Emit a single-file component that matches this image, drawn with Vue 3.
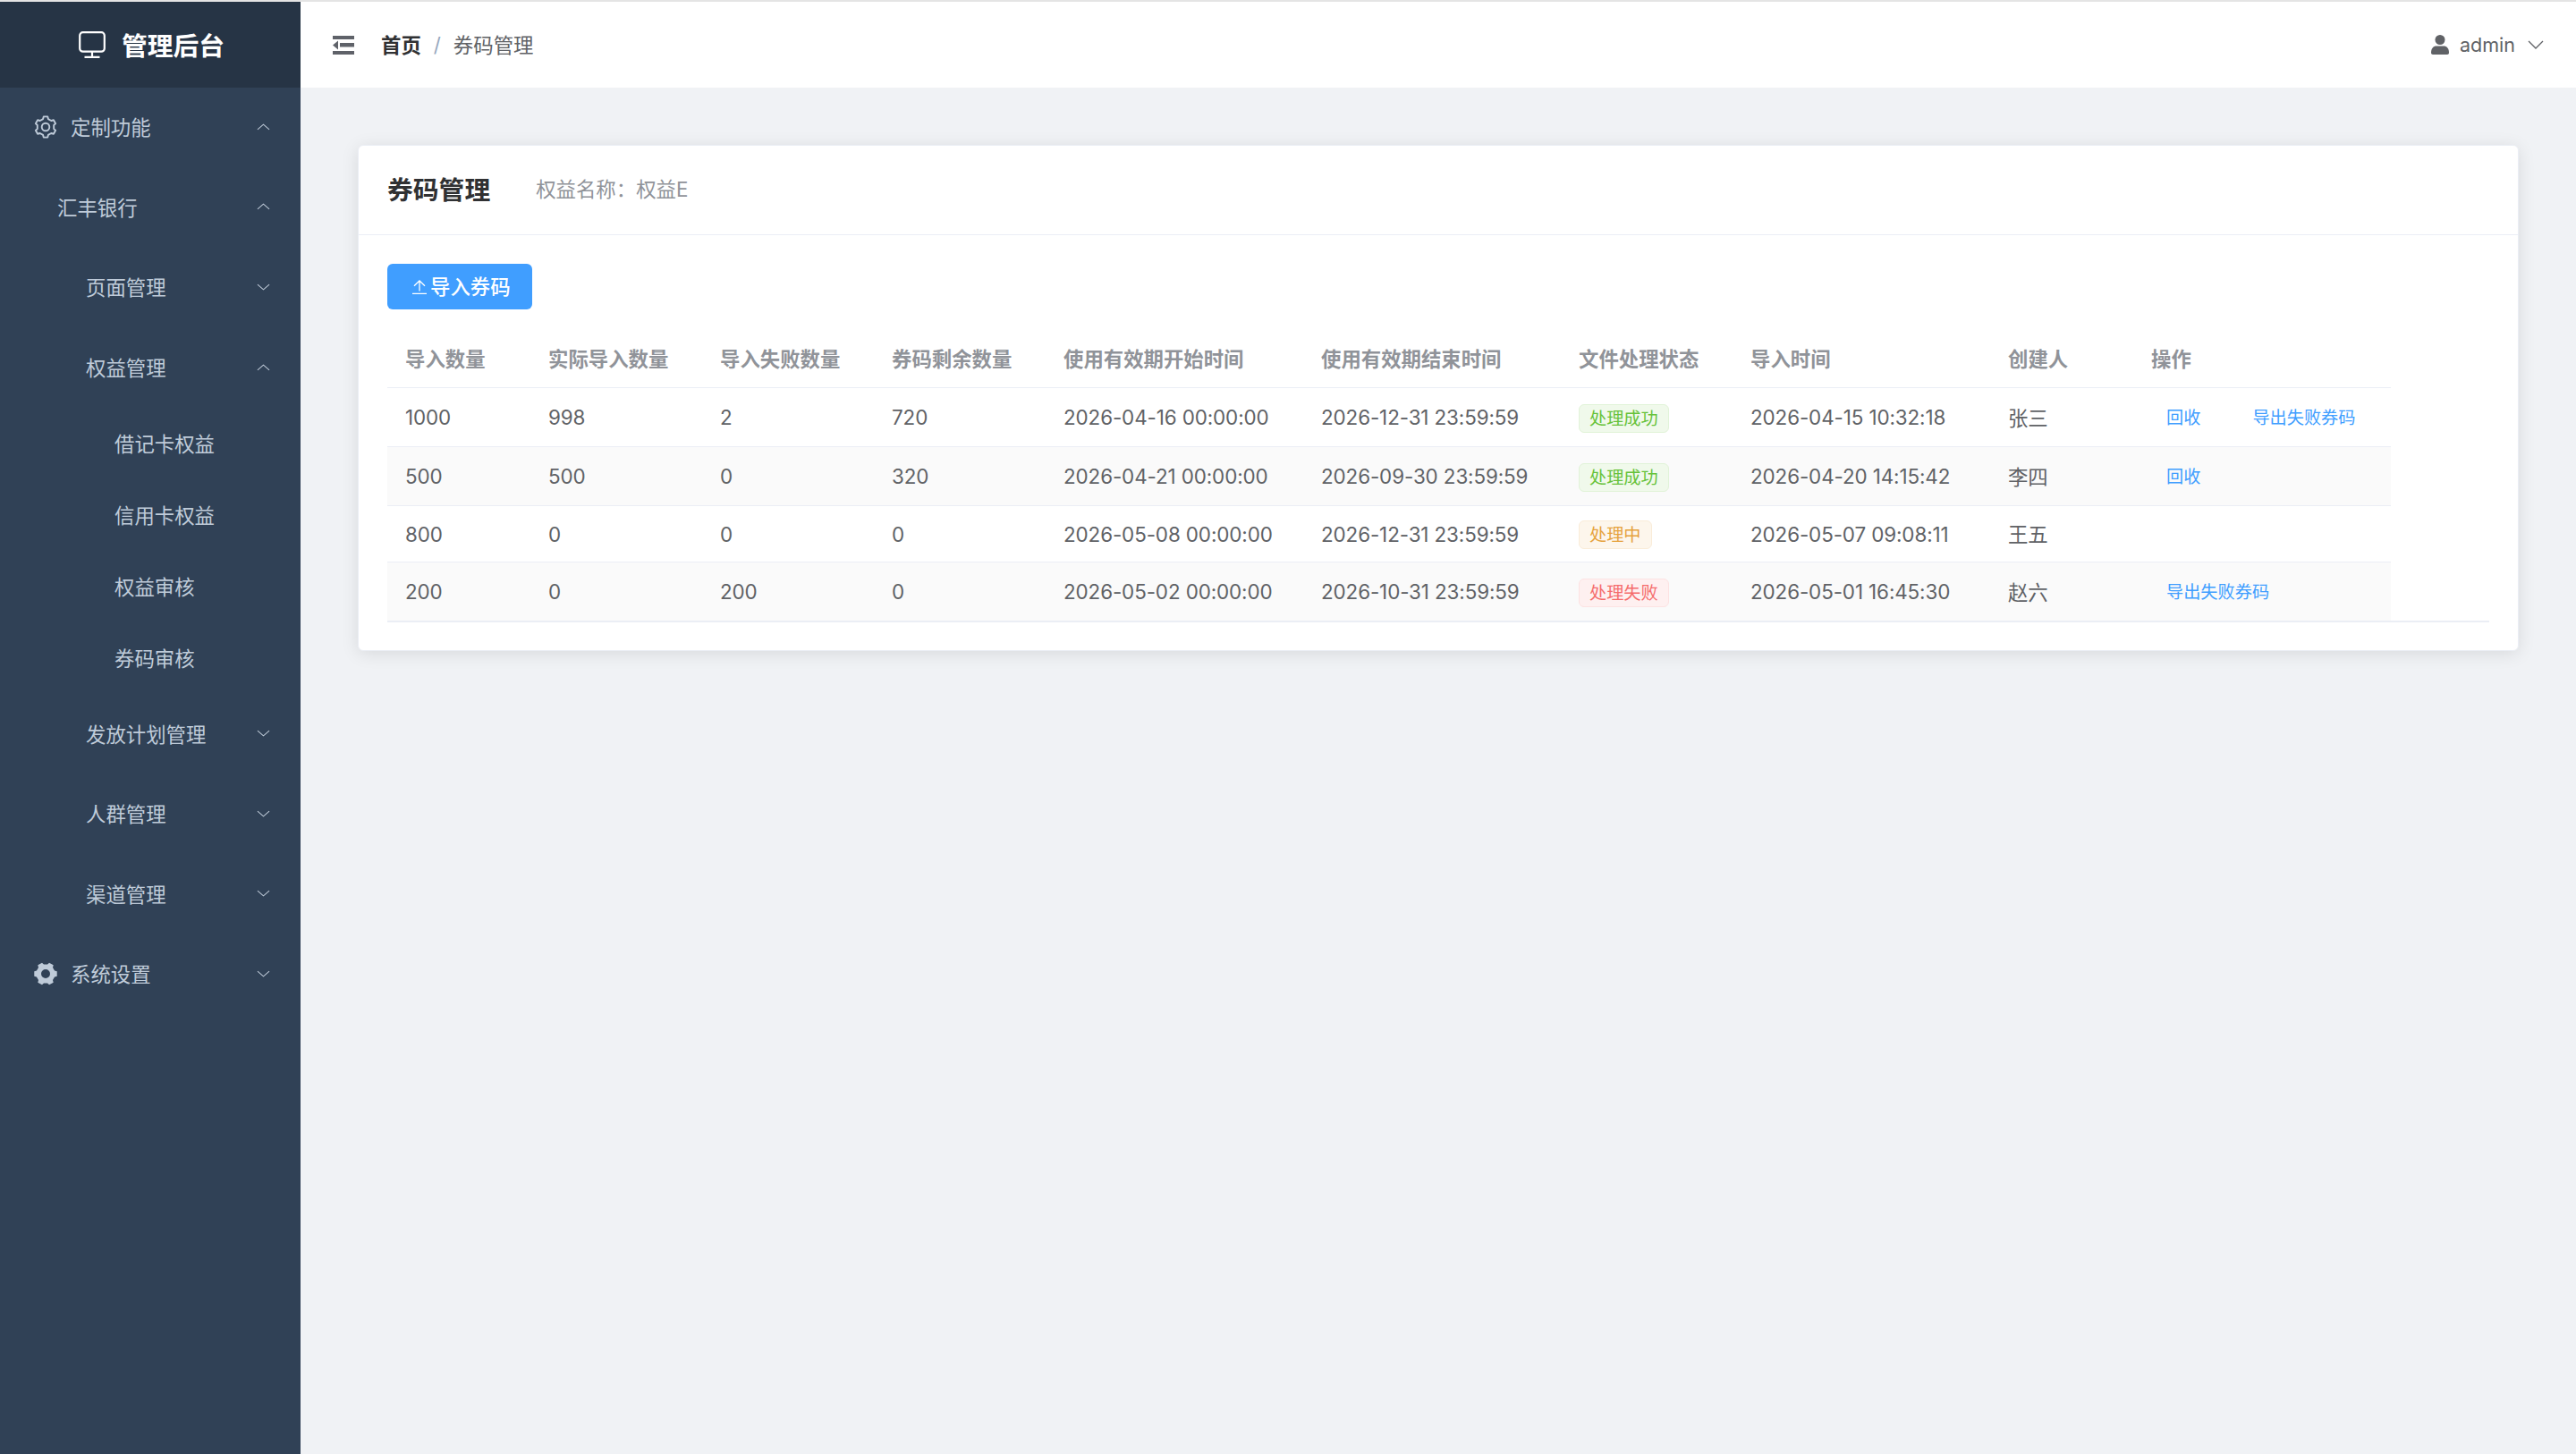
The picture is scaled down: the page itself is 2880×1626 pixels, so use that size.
<template>
  <div class="page">
    <aside class="sidebar">
      <div class="logo">
        <svg class="logo-icon" viewBox="0 0 30 30" fill="none" stroke="#fff" stroke-width="2.2">
          <rect x="1.200" y="1.200" width="27.600" height="21.500" rx="3.500" />
          <path d="M15 23v5.800M6.500 28.900h17" />
        </svg>
        <span class="logo-text">管理后台</span>
      </div>
      <nav class="menu">
        <div v-for="item in menu" :key="item.name" class="menu-item" :class="'lv' + item.level">
          <svg v-if="item.icon === 'outline'" class="menu-icon" viewBox="0 0 26 26" fill="none" stroke="#bfcbd9" stroke-width="1.9" stroke-linejoin="round">
            <path :d="outlineGear" />
            <circle cx="13" cy="13" r="4.300" />
          </svg>
          <svg v-if="item.icon === 'solid'" class="menu-icon" viewBox="0 0 26 26" fill="#bfcbd9">
            <path fill-rule="evenodd" :d="solidGear" />
          </svg>
          <span class="menu-text">{{ item.name }}</span>
          <svg v-if="item.arrow" class="arrow" :class="{ up: item.arrow === 'up' }" viewBox="0 0 16 8" fill="none" stroke="#bfcbd9" stroke-width="1.100">
            <path d="M1 1l7 6 7-6" />
          </svg>
        </div>
      </nav>
    </aside>

    <div class="main">
      <header class="navbar">
        <svg class="hamburger" viewBox="0 0 24 21" fill="#5f6269">
          <rect x="0" y="0" width="24" height="4" />
          <rect x="0" y="17" width="24" height="4" />
          <rect x="8" y="8" width="16" height="4.500" />
          <path d="M0 10.500l6-5v10z" />
        </svg>
        <div class="breadcrumb">
          <span class="crumb-home">首页</span>
          <span class="crumb-sep">/</span>
          <span class="crumb-now">券码管理</span>
        </div>
        <div class="user">
          <svg class="user-icon" viewBox="0 0 20 22" fill="#606266">
            <circle cx="10" cy="5.500" r="5.500" />
            <path d="M0 20c0-5 2.500-7.500 6-7.500h8c3.500 0 6 2.500 6 7.500 0 1.200-.8 2-2 2H2c-1.200 0-2-.8-2-2z" />
          </svg>
          <span class="user-name">admin</span>
          <svg class="user-arrow" viewBox="0 0 18 10" fill="none" stroke="#606266" stroke-width="1.300">
            <path d="M1 1l8 8 8-8" />
          </svg>
        </div>
      </header>

      <section class="content">
        <div class="card">
          <div class="card-head">
            <span class="card-title">券码管理</span>
            <span class="card-sub">权益名称：权益E</span>
          </div>
          <div class="card-body">
            <button class="import-btn">
              <svg viewBox="0 0 16 16" fill="none" stroke="#fff" stroke-width="1.300">
                <path d="M0 15.300h16M8 12.500V1M2 6.700L8 1l6 5.700" />
              </svg>
              <span>导入券码</span>
            </button>
            <div class="table-wrap">
              <table class="table">
                <colgroup>
                  <col v-for="w in colWidths" :key="w.key" :style="{ width: w.width + 'px' }" />
                </colgroup>
                <thead>
                  <tr>
                    <th v-for="h in headers" :key="h">{{ h }}</th>
                  </tr>
                </thead>
                <tbody>
                  <tr v-for="(row, i) in rows" :key="i" :class="{ striped: i % 2 === 1 }">
                    <td>{{ row.total }}</td>
                    <td>{{ row.actual }}</td>
                    <td>{{ row.failed }}</td>
                    <td>{{ row.left }}</td>
                    <td>{{ row.start }}</td>
                    <td>{{ row.end }}</td>
                    <td><span class="tag" :class="row.status.type">{{ row.status.text }}</span></td>
                    <td>{{ row.time }}</td>
                    <td class="who">{{ row.user }}</td>
                    <td class="ops">
                      <a v-for="op in row.ops" :key="op" class="op">{{ op }}</a>
                    </td>
                  </tr>
                </tbody>
              </table>
            </div>
          </div>
        </div>
      </section>
    </div>
  </div>
</template>

<script setup>
// gear outline: six teeth round the centre of a 26x26 box
function gear(rOut, rIn, startDeg, halfTooth) {
  const pts = []
  for (let i = 0; i < 6; i++) {
    const a = startDeg + i * 60
    for (const [deg, r] of [[a - halfTooth - 7, rIn], [a - halfTooth, rOut], [a + halfTooth, rOut], [a + halfTooth + 7, rIn]]) {
      const rad = (deg * Math.PI) / 180
      pts.push((13 + r * Math.cos(rad)).toFixed(2) + ' ' + (13 + r * Math.sin(rad)).toFixed(2))
    }
  }
  return 'M' + pts.join('L') + 'Z'
}

const outlineGear = gear(11.8, 9.4, -90, 11)
const solidGear = gear(13, 10.6, 0, 12) + 'M13 8a5 5 0 1 0 0 10 5 5 0 0 0 0-10z'

const menu = [
  { name: '定制功能', level: 1, icon: 'outline', arrow: 'up' },
  { name: '汇丰银行', level: 2, arrow: 'up' },
  { name: '页面管理', level: 3, arrow: 'down' },
  { name: '权益管理', level: 3, arrow: 'up' },
  { name: '借记卡权益', level: 4 },
  { name: '信用卡权益', level: 4 },
  { name: '权益审核', level: 4 },
  { name: '券码审核', level: 4 },
  { name: '发放计划管理', level: 3, arrow: 'down' },
  { name: '人群管理', level: 3, arrow: 'down' },
  { name: '渠道管理', level: 3, arrow: 'down' },
  { name: '系统设置', level: 1, icon: 'solid', arrow: 'down' }
]

const headers = ['导入数量', '实际导入数量', '导入失败数量', '券码剩余数量', '使用有效期开始时间', '使用有效期结束时间', '文件处理状态', '导入时间', '创建人', '操作']

const colWidths = [160, 192, 192, 192, 288, 288, 192, 288, 160, 288].map((width, key) => ({ width, key }))

const success = { type: 'success', text: '处理成功' }
const rows = [
  { total: 1000, actual: 998, failed: 2, left: 720, start: '2026-04-16 00:00:00', end: '2026-12-31 23:59:59', status: success, time: '2026-04-15 10:32:18', user: '张三', ops: ['回收', '导出失败券码'] },
  { total: 500, actual: 500, failed: 0, left: 320, start: '2026-04-21 00:00:00', end: '2026-09-30 23:59:59', status: success, time: '2026-04-20 14:15:42', user: '李四', ops: ['回收'] },
  { total: 800, actual: 0, failed: 0, left: 0, start: '2026-05-08 00:00:00', end: '2026-12-31 23:59:59', status: { type: 'warning', text: '处理中' }, time: '2026-05-07 09:08:11', user: '王五', ops: [] },
  { total: 200, actual: 0, failed: 200, left: 0, start: '2026-05-02 00:00:00', end: '2026-10-31 23:59:59', status: { type: 'danger', text: '处理失败' }, time: '2026-05-01 16:45:30', user: '赵六', ops: ['导出失败券码'] }
]
</script>

<style>
html,
body {
  margin: 0;
  background: #f0f2f5;
}
</style>

<style scoped>
.page {
  display: flex;
  width: 2880px;
  height: 1626px;
  padding-top: 2px;
  box-sizing: border-box;
  background: #e4e4e4;
  font-family: Inter, "Noto Sans CJK SC", sans-serif;
  font-size: 22.4px;
  color: #606266;
  overflow: hidden;
}

.sidebar {
  width: 336px;
  flex: none;
  background: #304156;
}

.logo {
  height: 96px;
  background: #263445;
  display: flex;
  align-items: center;
  justify-content: center;
  gap: 18px;
  padding-left: 3px;
  box-sizing: border-box;
  color: #fff;
  font-size: 28.8px;
  font-weight: 600;
}

.logo-icon {
  width: 30px;
  height: 30px;
}

.logo-text {
  margin-top: -2px;
}

.menu {
  margin-top: -1px;
}

.menu-item {
  display: flex;
  align-items: center;
  height: 89.6px;
  color: #bfcbd9;
  position: relative;
}

.menu-text {
  margin-top: -1px;
}

.lv1 {
  padding-left: 38px;
}

.lv2 {
  padding-left: 64px;
}

.lv3 {
  padding-left: 96px;
}

.lv4 {
  height: 80px;
  padding-left: 128px;
}

.menu-icon {
  width: 26px;
  height: 26px;
  margin-right: 15px;
}

.arrow {
  position: absolute;
  left: 287px;
  top: 50%;
  width: 15px;
  height: 8px;
  margin-top: -4px;
}

.arrow.up {
  transform: rotate(180deg);
}

.main {
  flex: 1;
  display: flex;
  flex-direction: column;
  min-width: 0;
}

.navbar {
  height: 96px;
  background: #fff;
  display: flex;
  align-items: center;
  padding: 0 36px;
}

.hamburger {
  width: 24px;
  height: 21px;
}

.breadcrumb {
  margin-left: 30px;
  margin-top: -2px;
  display: flex;
  align-items: center;
}

.crumb-home {
  color: #303133;
  font-weight: 600;
}

.crumb-sep {
  margin: 0 14px;
  color: #97a8be;
}

.user {
  margin-left: auto;
  display: flex;
  align-items: center;
}

.user-icon {
  width: 20px;
  height: 22px;
  margin-right: 12px;
}

.user-name {
  font-size: 21.5px;
  margin-top: -1px;
}

.user-arrow {
  width: 18px;
  height: 10px;
  margin-left: 14px;
}

.content {
  flex: 1;
  background: #f0f2f5;
  padding: 64px;
}

.card {
  height: 566px;
  box-sizing: border-box;
  background: #fff;
  border: 1px solid #ebeef5;
  border-radius: 6px;
  box-shadow: 0 3px 19px rgba(0, 0, 0, 0.1);
}

.card-head {
  height: 100px;
  box-sizing: border-box;
  padding: 0 32px 5px;
  display: flex;
  align-items: center;
  border-bottom: 1px solid #ebeef5;
}

.card-title {
  font-size: 28.8px;
  font-weight: 600;
  color: #303133;
}

.card-sub {
  margin-left: 51px;
  color: #909399;
}

.card-body {
  padding: 32px;
}

.import-btn {
  display: flex;
  align-items: center;
  width: 162px;
  height: 51px;
  padding: 0 0 0 28px;
  border: 0;
  border-radius: 6px;
  background: #409eff;
  color: #fff;
  font: inherit;
  font-weight: 500;
}

.import-btn svg {
  width: 16px;
  height: 16px;
  margin-right: 4px;
}

.import-btn span {
  margin-top: -4px;
}

.table-wrap {
  margin-top: 24px;
  border-bottom: 2px solid #ebeef5;
}

.table {
  table-layout: fixed;
  width: 2240px;
  border-collapse: separate;
  border-spacing: 0;
}

.table th {
  height: 59px;
  padding: 0 0 4px 20px;
  text-align: left;
  font-weight: 600;
  color: #909399;
  border-bottom: 1px solid #ebeef5;
}

.table td {
  height: 62px;
  padding: 0 0 0 20px;
  letter-spacing: -0.1px;
  border-bottom: 1px solid #ebeef5;
}

.table td.who {
  height: 60px;
  padding-bottom: 2px;
}

.table tr:last-child td {
  border-bottom: 0;
}

.striped td {
  background: #fafafa;
}

.tag {
  display: inline-block;
  box-sizing: border-box;
  height: 32px;
  line-height: 30px;
  padding: 0 11px;
  border: 1px solid;
  border-radius: 6px;
  font-size: 19.2px;
  letter-spacing: 0;
  vertical-align: -3px;
}

.success {
  background: #f0f9eb;
  border-color: #e1f3d8;
  color: #67c23a;
}

.warning {
  background: #fdf6ec;
  border-color: #faecd8;
  color: #e6a23c;
}

.danger {
  background: #fef0f0;
  border-color: #fde2e2;
  color: #f56c6c;
}

.table td.ops {
  padding-left: 37px;
}

.op {
  display: inline-block;
  height: 65px;
  line-height: 67px;
  font-size: 19.2px;
  letter-spacing: 0;
  color: #409eff;
  vertical-align: middle;
}

.op + .op {
  margin-left: 58px;
}
</style>
